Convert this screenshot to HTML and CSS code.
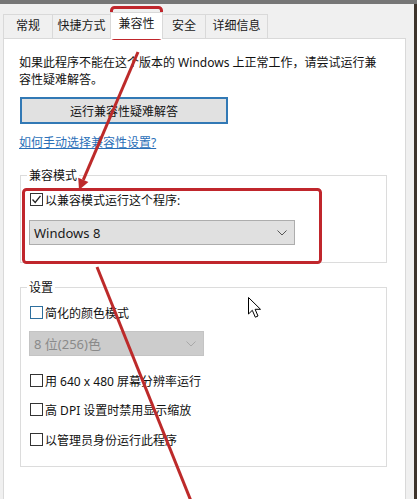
FILE: index.html
```html
<!DOCTYPE html>
<html lang="zh-CN">
<head>
<meta charset="utf-8">
<title>兼容性</title>
<link rel="stylesheet" href="styles.css">
</head>
<body>
<div class="window">
  <div class="titlebar"></div>
  <div class="frame">
    <div class="dialog">
      <div class="tabs">
        <div class="tab w1">常规</div>
        <div class="tab w2">快捷方式</div>
        <div class="tab active w3">兼容性</div>
        <div class="tab w4">安全</div>
        <div class="tab w5">详细信息</div>
      </div>
      <div class="panel">
        <p class="intro">如果此程序不能在这个版本的 Windows 上正常工作，请尝试运行兼<br>容性疑难解答。</p>
        <button class="btn">运行兼容性疑难解答</button>
        <a class="link">如何手动选择兼容性设置?</a>

        <div class="group g1">
          <span class="legend">兼容模式</span>
          <div class="row r-first">
            <span class="cb">
              <svg width="11" height="11" viewBox="0 0 11 11"><polyline points="1.5,5.5 4.2,8.5 9.5,1.8" fill="none" stroke="#222" stroke-width="1.3"/></svg>
            </span>
            <span>以兼容模式运行这个程序:</span>
          </div>
          <div class="select sel-win">
            <span>Windows 8</span>
            <svg width="10" height="6" viewBox="0 0 10 6"><polyline points="0.5,0.5 5,5 9.5,0.5" fill="none" stroke="#555" stroke-width="1"/></svg>
          </div>
        </div>

        <div class="group g2">
          <span class="legend">设置</span>
          <div class="row r-first"><span class="cb focus"></span><span>简化的颜色模式</span></div>
          <div class="select sel-color disabled">
            <span>8 位(256)色</span>
            <svg width="10" height="6" viewBox="0 0 10 6"><polyline points="0.5,0.5 5,5 9.5,0.5" fill="none" stroke="#a8a8a8" stroke-width="1"/></svg>
          </div>
          <div class="row r-a"><span class="cb"></span><span>用 640 x 480 屏幕分辨率运行</span></div>
          <div class="row r-b"><span class="cb"></span><span>高 DPI 设置时禁用显示缩放</span></div>
          <div class="row r-c"><span class="cb"></span><span>以管理员身份运行此程序</span></div>
        </div>
      </div>
    </div>
    <div class="edge"></div>
  </div>

  <svg class="overlay" width="417" height="499" viewBox="0 0 417 499">
    <rect x="111.5" y="7.5" width="50" height="31" rx="3" fill="none" stroke="#c0262c" stroke-width="3"/>
    <rect x="23.5" y="189.5" width="297" height="73" rx="3" fill="none" stroke="#c0262c" stroke-width="3"/>
    <line x1="138" y1="52" x2="83.3" y2="179.9" stroke="#bd2a2a" stroke-width="3"/>
    <polygon points="79,190 88.4,182.1 78.2,177.7" fill="#bd2a2a"/>
    <line x1="97" y1="267" x2="193" y2="506" stroke="#bd2a2a" stroke-width="3"/>
    <path d="M248.5 297.5 L248.5 314 L252.3 310.3 L255.3 317.2 L258 316 L255.1 309.3 L260.5 309.3 Z" fill="#fff" stroke="#000" stroke-width="1" stroke-linejoin="miter"/>
  </svg>
</div>
</body>
</html>
```

FILE: styles.css
```css
* { box-sizing: border-box; }
html, body { margin: 0; padding: 0; }
body {
  width: 417px;
  height: 499px;
  overflow: hidden;
  font-family: "Noto Sans", "Noto Sans CJK SC", sans-serif;
  font-size: 12px;
  color: #111;
}
.window {
  position: relative;
  width: 417px;
  height: 499px;
  display: flex;
  flex-direction: column;
  background: #f0f0f0;
}
.titlebar {
  height: 4px;
  background: #767676;
  flex: none;
}
.frame {
  flex: 1;
  display: flex;
  min-height: 0;
}
.dialog {
  flex: 1;
  display: flex;
  flex-direction: column;
  padding: 0 8px 0 3px;
  background: #f0f0f0;
}
.edge {
  width: 3px;
  flex: none;
  background: #3d342c;
}
.tabs {
  height: 34px;
  flex: none;
  display: flex;
  align-items: flex-end;
}
.tab {
  height: 24px;
  line-height: 22px;
  text-align: center;
  border: 1px solid #d9d9d9;
  border-bottom: none;
  background: #f0f0f0;
  margin-right: -1px;
  white-space: nowrap;
  color: #1a1a1a;
}
.tab.active {
  height: 27px;
  background: #fff;
  margin-bottom: -1px;
  position: relative;
  z-index: 1;
  border-color: #d9d9d9;
}
.w1 { width: 50px; }
.w2 { width: 59px; }
.w3 { width: 53px; }
.w4 { width: 44px; }
.w5 { width: 63px; }
.panel {
  flex: 1;
  background: #fff;
  border: 1px solid #d9d9d9;
  border-bottom: none;
  padding: 15px 0 0 15px;
}
.intro {
  margin: 0;
  line-height: 17px;
}
.btn {
  display: block;
  width: 208px;
  height: 27px;
  margin: 9px 0 0 1px;
  padding: 0;
  border: 2px solid #3279b5;
  background: #e1e1e1;
  font: inherit;
  color: #111;
}
.link {
  display: block;
  margin-top: 10px;
  line-height: 17px;
  color: #2a6fb8;
  text-decoration: underline;
  width: fit-content;
}
.group {
  border: 1px solid #dcdcdc;
  margin: 24px 18px 0 1px;
}
.g1 { padding-bottom: 17px; }
.g2 { padding-bottom: 18px; }
.legend {
  display: block;
  width: fit-content;
  margin: -9px 0 0 6px;
  padding: 0 2px;
  background: #fff;
  line-height: 17px;
}
.row {
  display: flex;
  align-items: center;
  gap: 2px;
  height: 17px;
  margin-left: 9px;
}
.r-first { margin-top: 7px; }
.g2 .r-first { margin-top: 8px; }
.r-a { margin-top: 16px; }
.r-b { margin-top: 12px; }
.r-c { margin-top: 13px; }
.cb {
  width: 13px;
  height: 13px;
  flex: none;
  border: 1px solid #333;
  background: #fff;
  display: flex;
  align-items: center;
  justify-content: center;
}
.cb.focus { border-color: #2e6f9e; }
.select {
  height: 25px;
  margin-left: 8px;
  display: flex;
  align-items: center;
  justify-content: space-between;
  padding: 0 7px 0 4px;
  border: 1px solid #adadad;
  background: #e0e0e0;
  font-size: 13px;
  color: #1a1a1a;
}
.sel-win { width: 266px; margin-top: 12px; }
.sel-color { width: 175px; margin-top: 10px; }
.select.disabled {
  background: #cccccc;
  border-color: #c4c4c4;
  color: #8a8a8a;
}
.overlay {
  position: absolute;
  left: 0;
  top: 0;
  pointer-events: none;
}
```
